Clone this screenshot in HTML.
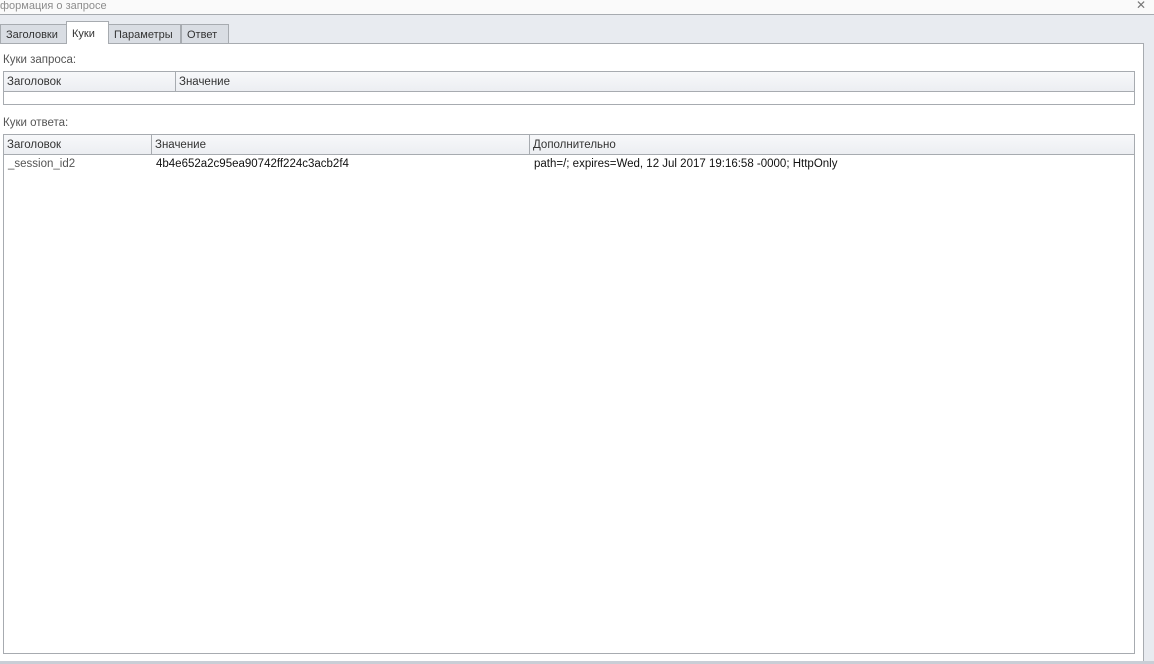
<!DOCTYPE html>
<html><head><meta charset="utf-8"><style>
*{margin:0;padding:0;box-sizing:border-box}
body{width:1154px;height:664px;overflow:hidden;background:#e8ebf0;font-family:"Liberation Sans",Tahoma,sans-serif;font-size:11px;color:#222;position:relative}
.abs{position:absolute}
.title{left:0;top:0;width:1154px;height:15px;background:#fafafa;border-bottom:1px solid #a7abb0;color:#8d8d8d;font-size:11px;line-height:13px}
.close{right:8px;top:-2px;color:#777;font-size:12px}
.tab{top:24px;height:20px;background:#d9dde3;border:1px solid #a7abb0;border-bottom:none;line-height:20px;padding-left:5px;color:#333;font-size:11px}
.tab.act{background:#fff;top:21px;height:23px;line-height:24px;z-index:2}
.panel{left:0;top:43px;width:1144px;height:619px;background:#fff;border-right:1px solid #a7abb0;border-top:1px solid #a7abb0}
.bot{left:0;top:661px;width:1154px;height:3px;background:#c9ced6}
.lbl{color:#555;font-size:11.5px}
.tbl{border:1px solid #a7abb0;background:#fff}
.hd{position:absolute;left:0;top:0;height:20px;width:100%;background:linear-gradient(#f7f8fa,#eceef2);border-bottom:1px solid #a7abb0}
.hc{position:absolute;top:0;height:19px;line-height:20px;padding-left:3px;border-right:1px solid #a7abb0;color:#333;font-size:11.5px}
.cell{position:absolute;top:22px;line-height:15px;color:#111;font-size:11.5px}
</style></head><body>
<div class="abs title">формация о запросе</div>
<div class="abs close">✕</div>
<div class="abs tab" style="left:0;width:67px">Заголовки</div>
<div class="abs tab act" style="left:66px;width:43px">Куки</div>
<div class="abs tab" style="left:108px;width:73px">Параметры</div>
<div class="abs tab" style="left:181px;width:48px">Ответ</div>
<div class="abs panel"></div>
<div class="abs bot"></div>
<div class="abs lbl" style="left:3px;top:54px">Куки запроса:</div>
<div class="abs tbl" style="left:3px;top:71px;width:1132px;height:34px">
 <div class="hd"><div class="hc" style="left:0;width:172px">Заголовок</div><div class="hc" style="left:172px;width:958px;border-right:none">Значение</div></div>
</div>
<div class="abs lbl" style="left:3px;top:117px">Куки ответа:</div>
<div class="abs tbl" style="left:3px;top:134px;width:1132px;height:520px">
 <div class="hd"><div class="hc" style="left:0;width:148px">Заголовок</div><div class="hc" style="left:148px;width:378px">Значение</div><div class="hc" style="left:526px;width:600px;border-right:none">Дополнительно</div></div>
 <div class="cell" style="left:4px;color:#555">_session_id2</div>
 <div class="cell" style="left:152px">4b4e652a2c95ea90742ff224c3acb2f4</div>
 <div class="cell" style="left:530px">path=/; expires=Wed, 12 Jul 2017 19:16:58 -0000; HttpOnly</div>
</div>
</body></html>
